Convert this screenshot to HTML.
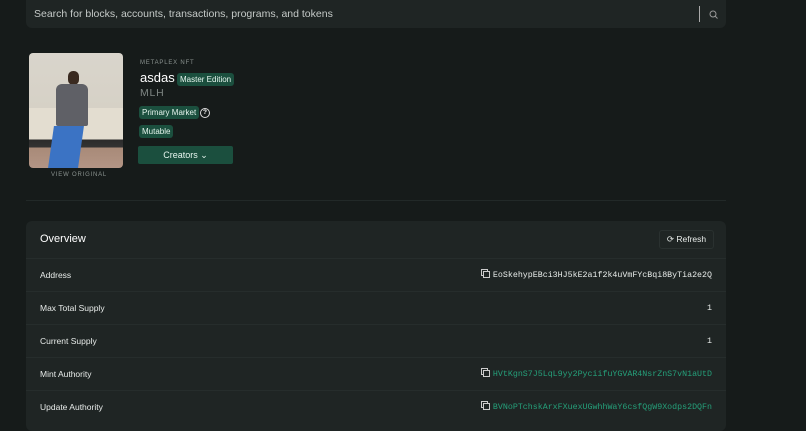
<!DOCTYPE html><html><head><style>
body{margin:0;width:806px;height:420px;overflow:hidden;background:#161b1a;font-family:"Liberation Sans",sans-serif;color:#fff;position:relative}
.a{position:absolute}
.search{left:26px;top:0;width:700px;height:28px;background:#1f2524;border-radius:0 0 6px 6px}
.badge{background:#1b4f3e;color:#e6f5ee;font-size:8px;padding:2px 3px;border-radius:3px;display:inline-block}
.card{left:26px;top:221px;width:700px;height:210px;background:#1f2524;border-radius:6px}
.row{position:absolute;left:0;width:700px;height:33px;border-top:1px solid #262d2c;font-size:8.5px;color:#e8ecea}
.row .l{position:absolute;left:14px;top:11px}
.row .r{position:absolute;right:14px;top:12px;font-family:"Liberation Mono",monospace;font-size:8.3px}
.g{color:#25a07a}
.cp{display:inline-block;width:5px;height:5px;border:1px solid #ccc;margin-right:5px;vertical-align:-1px;position:relative;left:2px;box-shadow:-2px -2px 0 -1px #1f2524,-2px -2px 0 0 #ccc}
</style></head><body>
<div class="a search"><div class="a" style="left:8px;top:8px;font-size:10.5px;color:#c5cac8">Search for blocks, accounts, transactions, programs, and tokens</div>
<div class="a" style="left:673px;top:6px;width:1px;height:16px;background:#aaa"></div>
<svg class="a" style="left:683px;top:10px" width="9" height="9" viewBox="0 0 9 9"><circle cx="4" cy="4" r="3" fill="none" stroke="#999" stroke-width="1"/><path d="M6 6l2.5 2.5" stroke="#999"/></svg></div>
<div class="a" style="left:29px;top:53px;width:94px;height:115px;border-radius:4px;overflow:hidden;background:linear-gradient(#d9d5cc 0,#d6d1c6 48%,#e3ddd0 48%,#e3ddd0 75%,#2a2a2a 75%,#333 82%,#a88a78 82%,#b39585 100%)">
<div class="a" style="left:39px;top:18px;width:11px;height:14px;border-radius:5px;background:#3a2a20"></div>
<div class="a" style="left:27px;top:31px;width:32px;height:42px;background:#5f6066;border-radius:6px 6px 2px 2px"></div>
<div class="a" style="left:22px;top:73px;width:30px;height:42px;background:#3b73c4;transform:skewX(-8deg)"></div></div>
<div class="a" style="left:51px;top:172px;font-size:6px;letter-spacing:.8px;color:#8a928f">VIEW ORIGINAL</div>
<div class="a" style="left:140px;top:60px;font-size:6px;letter-spacing:.8px;color:#8a928f">METAPLEX NFT</div>
<div class="a" style="left:140px;top:70px;font-size:13px">asdas</div>
<div class="a badge" style="left:177px;top:73px">Master Edition</div>
<div class="a" style="left:140px;top:87px;font-size:10.5px;color:#7e8683;letter-spacing:.8px">MLH</div>
<div class="a badge" style="left:139px;top:106px">Primary Market</div>
<div class="a" style="left:200px;top:108px;width:8px;height:8px;border:1px solid #ddd;border-radius:50%;font-size:6.5px;text-align:center;line-height:8px;font-weight:bold">?</div>
<div class="a badge" style="left:139px;top:125px">Mutable</div>
<div class="a" style="left:138px;top:146px;width:95px;height:18px;background:#1b4f3e;border-radius:2px;font-size:9px;text-align:center;line-height:18px;color:#e6f5ee">Creators ⌄</div>
<div class="a" style="left:26px;top:200px;width:700px;height:1px;background:#222928"></div>
<div class="a card">
<div class="a" style="left:14px;top:12px;font-size:11px">Overview</div>
<div class="a" style="left:633px;top:9px;width:53px;height:17px;border:1px solid #2a3130;border-radius:3px;font-size:8.5px;line-height:17px;text-align:center;color:#e8ecea">⟳ Refresh</div>
<div class="row" style="top:37px"><span class="l">Address</span><span class="r"><span class="cp"></span>EoSkehypEBci3HJ5kE2a1f2k4uVmFYcBqi8ByTia2e2Q</span></div>
<div class="row" style="top:70px"><span class="l">Max Total Supply</span><span class="r">1</span></div>
<div class="row" style="top:103px"><span class="l">Current Supply</span><span class="r">1</span></div>
<div class="row" style="top:136px"><span class="l">Mint Authority</span><span class="r g"><span class="cp"></span>HVtKgnS7J5LqL9yy2PyciifuYGVAR4NsrZnS7vN1aUtD</span></div>
<div class="row" style="top:169px"><span class="l">Update Authority</span><span class="r g"><span class="cp"></span>BVNoPTchskArxFXuexUGwhhWaY6csfQgW9Xodps2DQFn</span></div>
</div>
</body></html>
